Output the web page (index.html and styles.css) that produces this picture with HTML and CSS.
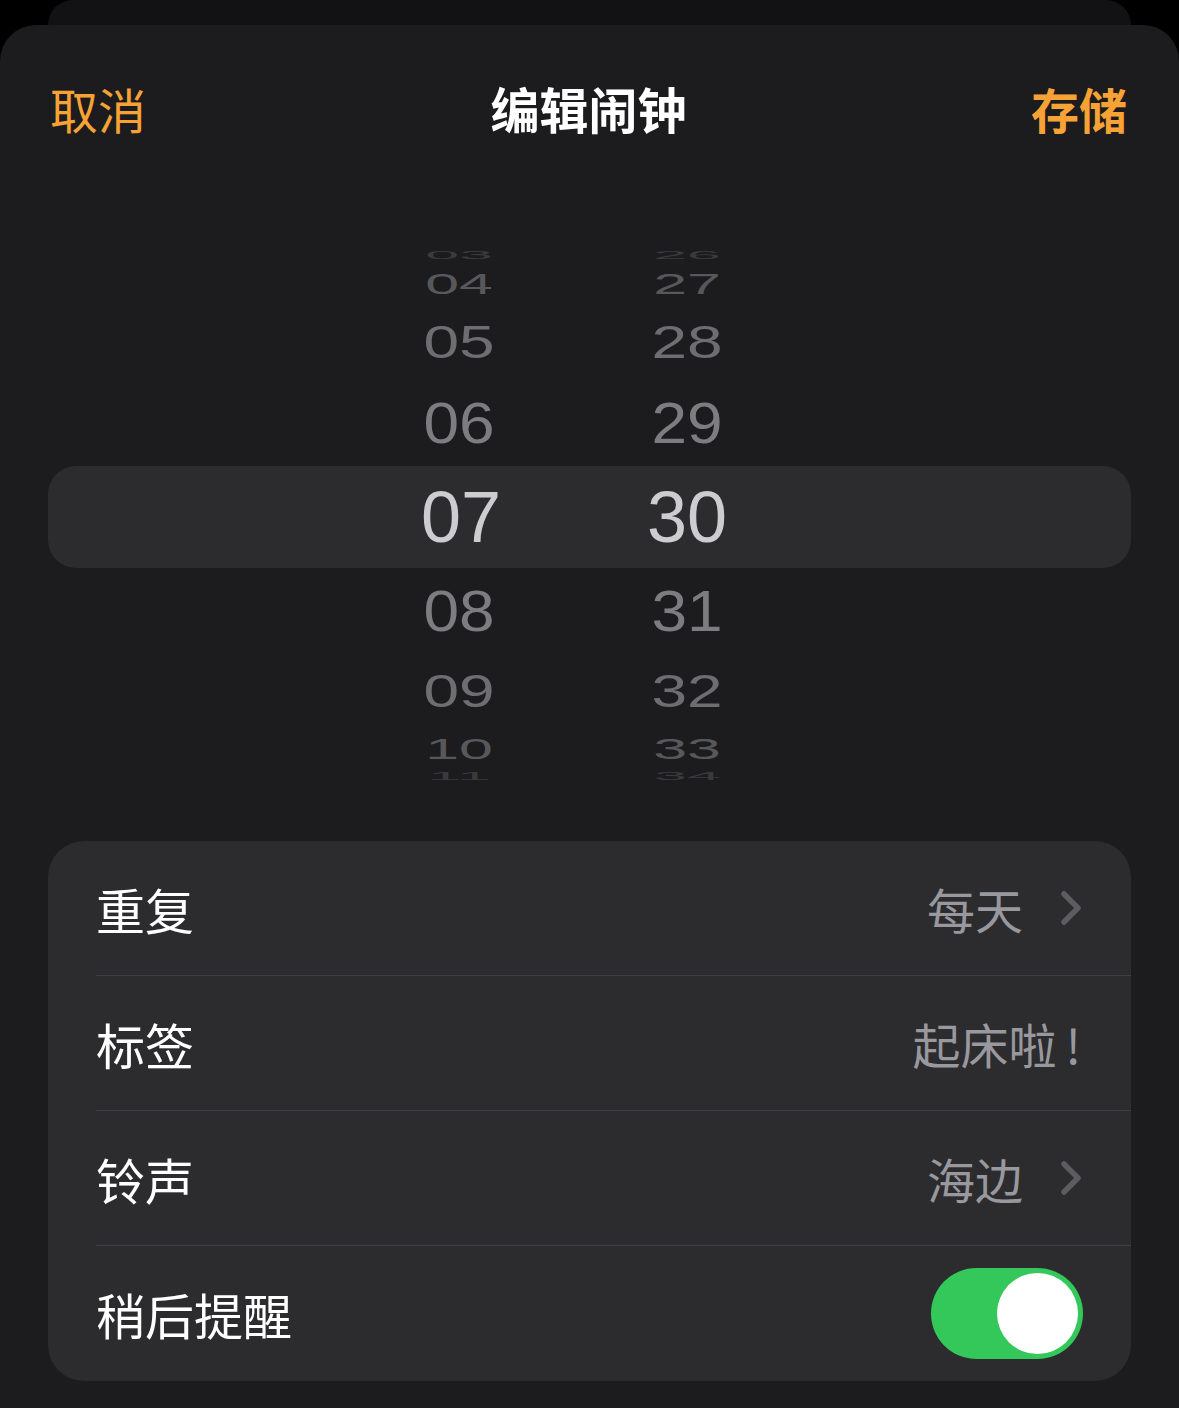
FILE: index.html
```html
<!DOCTYPE html>
<html>
<head>
    <meta charset="utf-8">
    <title>编辑闹钟</title>
    <link rel="stylesheet" href="styles.css">
</head>
<body>
    <div class="back"></div>
    <div class="sheet">
        <div class="nav">
            <a href="javascript:;" class="cancel">取消</a>
            <h2>编辑闹钟</h2>
            <a href="javascript:;" class="save">存储</a>
        </div>

        <div class="picker">
            <div class="row r03"><span>03</span><span>26</span></div>
            <div class="row r04"><span>04</span><span>27</span></div>
            <div class="row r05"><span>05</span><span>28</span></div>
            <div class="row r06"><span>06</span><span>29</span></div>
            <div class="row sel"><span>07</span><span>30</span></div>
            <div class="row r08"><span>08</span><span>31</span></div>
            <div class="row r09"><span>09</span><span>32</span></div>
            <div class="row r10"><span>10</span><span>33</span></div>
            <div class="row r11"><span>11</span><span>34</span></div>
        </div>

        <div class="list">
            <div class="item">
                <strong>重复</strong>
                <span class="val">每天</span>
                <svg class="chev" width="24" height="36" viewBox="0 0 24 36"><polyline points="5,4 19,18 5,32" fill="none" stroke="#5d5d61" stroke-width="5.5" stroke-linecap="round" stroke-linejoin="round"/></svg>
            </div>
            <div class="item">
                <strong>标签</strong>
                <span class="val">起床啦<span class="bang">!</span></span>
            </div>
            <div class="item">
                <strong>铃声</strong>
                <span class="val">海边</span>
                <svg class="chev" width="24" height="36" viewBox="0 0 24 36"><polyline points="5,4 19,18 5,32" fill="none" stroke="#5d5d61" stroke-width="5.5" stroke-linecap="round" stroke-linejoin="round"/></svg>
            </div>
            <div class="item last">
                <strong>稍后提醒</strong>
                <span class="switch on"><i></i></span>
            </div>
        </div>
    </div>
</body>
</html>
```

FILE: styles.css
```css
html,
body {
    overflow: hidden;
}

body,
div,
h2,
p {
    margin: 0;
    padding: 0;
}

body {
    background: #000;
    color: #fff;
    font-family: "Noto Sans CJK SC", "Noto Sans", sans-serif;
}

.back {
    height: 25px;
    margin: 0 48px;
    background: #121214;
    border-radius: 25px 25px 0 0;
}

.sheet {
    height: 1383px;
    background: #1c1c1e;
    border-radius: 36px 36px 0 0;
}

/* 顶部导航 */
.nav {
    display: flex;
    justify-content: space-between;
    align-items: center;
    height: 66px;
    padding: 50px 52px 0 50px;
}

.nav a {
    color: #f7a234;
    font-size: 48px;
    line-height: 66px;
    text-decoration: none;
    outline: none;
}

.nav .save {
    font-weight: bold;
}

.nav h2 {
    font-size: 49px;
    line-height: 66px;
    font-weight: bold;
}

/* 时间滚轮 */
.picker {
    margin: 105px 48px 0;
    font-family: "Liberation Sans", Arial, sans-serif;
}

.row {
    display: flex;
    align-items: center;
    gap: 66px;
    padding-left: 333px;
    font-size: 64px;
    color: #7d7d81;
}

.row span {
    display: block;
    box-sizing: border-box;
    width: 160px;
    text-align: center;
    line-height: 1;
}

.row span:first-child {
    padding-right: 4px;
}

.r03 { height: 18px; color: #3a3a3d; }
.r04 { height: 40px; color: #58585c; }
.r05 { height: 76px; color: #6e6e72; }
.r06 { height: 86px; }
.r08 { height: 86px; }
.r09 { height: 74px; color: #6e6e72; }
.r10 { height: 42px; color: #58585c; }
.r11 { height: 12px; color: #3a3a3d; }

.r03 span, .r11 span { transform: scale(0.95, 0.17); }
.r04 span, .r10 span { transform: scale(0.95, 0.45); }
.r05 span, .r09 span { transform: scaleY(0.72); }
.r06 span, .r08 span { transform: scaleY(0.89); }

.row.sel {
    height: 102px;
    background: #2c2c2f;
    border-radius: 28px;
    font-size: 72px;
    color: #cdcdd1;
}

.row.sel span:first-child {
    padding-right: 0;
}

/* 设置列表 */
.list {
    margin: 59px 48px 0;
    background: #2c2c2e;
    border-radius: 36px;
    overflow: hidden;
}

.item {
    display: flex;
    align-items: center;
    height: 134px;
    margin-left: 48px;
    padding-right: 48px;
    border-top: 1px solid #404044;
    font-size: 48px;
}

.item:first-child {
    border-top: none;
}

.item.last {
    height: 135px;
}

.item strong {
    flex: 1;
    font-size: 49px;
    font-weight: normal;
    color: #fff;
}

.val {
    color: #98989e;
    padding-right: 2px;
}

.bang {
    padding-left: 9px;
}

.chev {
    display: block;
    margin-left: 34px;
}

.switch {
    display: block;
    width: 152px;
    height: 91px;
    border-radius: 46px;
    background: #33c859;
    position: relative;
}

.switch i {
    position: absolute;
    top: 5px;
    right: 5px;
    width: 81px;
    height: 81px;
    border-radius: 50%;
    background: #fff;
}
```
